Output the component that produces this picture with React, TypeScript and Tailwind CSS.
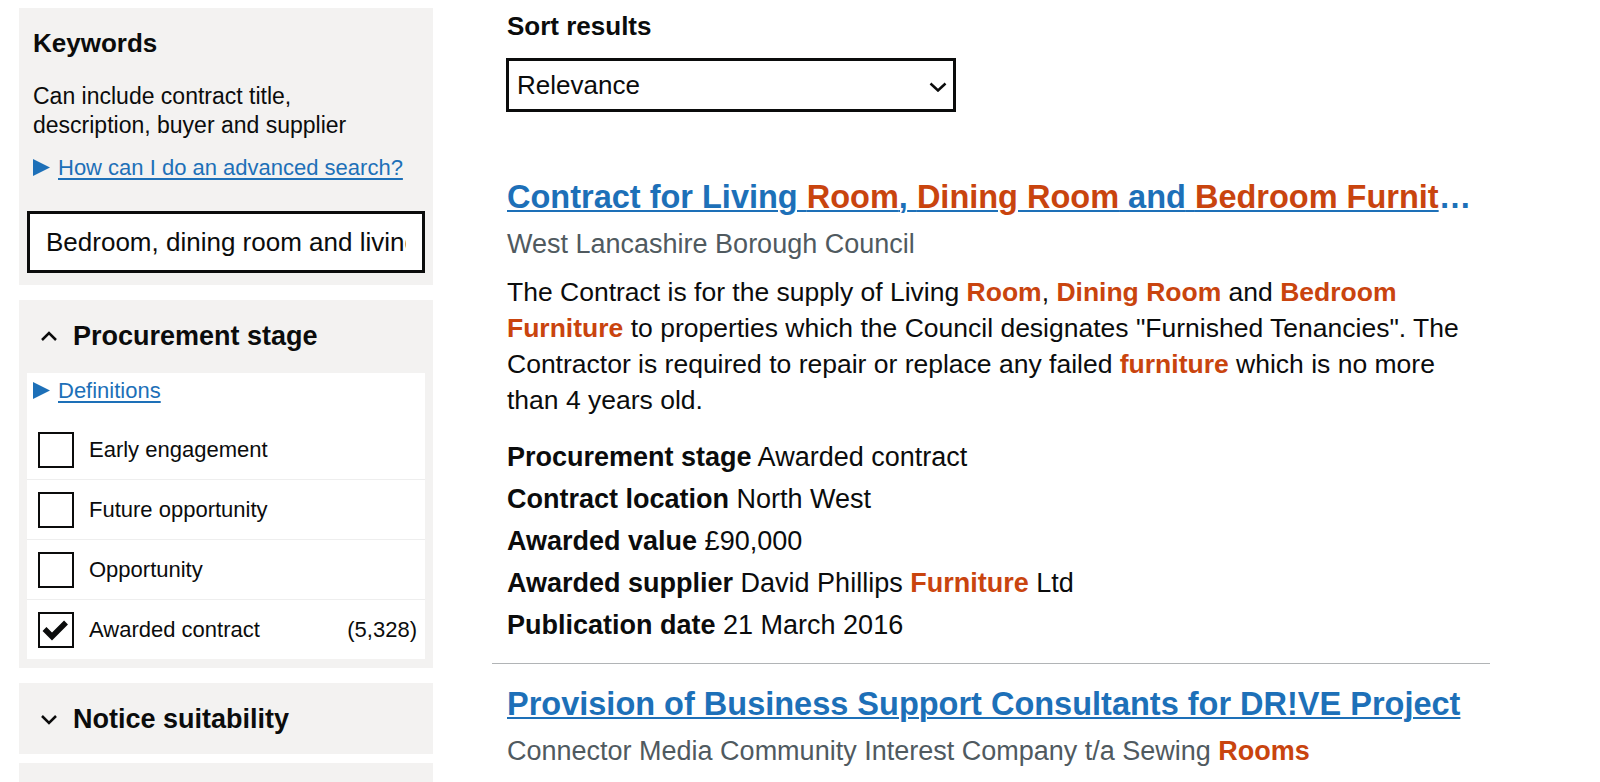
import React from 'react';

// Filtres de la colonne de gauche
const stages = [
  { label: 'Early engagement', checked: false, count: '' },
  { label: 'Future opportunity', checked: false, count: '' },
  { label: 'Opportunity', checked: false, count: '' },
  { label: 'Awarded contract', checked: true, count: '(5,328)' },
];

const meta = [
  { label: 'Procurement stage', value: 'Awarded contract' },
  { label: 'Contract location', value: 'North West' },
  { label: 'Awarded value', value: '£90,000' },
  { label: 'Awarded supplier', value: 'David Phillips ', hit: 'Furniture', after: ' Ltd' },
  { label: 'Publication date', value: '21 March 2016' },
];

function Hit({ children }: { children: React.ReactNode }) {
  return <span className="text-[#c9440e] font-bold">{children}</span>;
}

function Disclosure({ children }: { children: React.ReactNode }) {
  return (
    <div className="flex items-center gap-[8px] h-[28px]">
      <svg width="17" height="17" viewBox="0 0 17 17" className="shrink-0">
        <polygon points="0,0 17,8.5 0,17" fill="#1d70b8" />
      </svg>
      <a href="#" className="text-[22px] text-[#1d70b8] underline underline-offset-[3px]">
        {children}
      </a>
    </div>
  );
}

function Chevron({ up }: { up?: boolean }) {
  return (
    <svg width="18" height="12" viewBox="0 0 18 12" className="shrink-0">
      <path
        d={up ? 'M2 10 L9 3 L16 10' : 'M2 3 L9 10 L16 3'}
        fill="none"
        stroke="#0b0c0c"
        strokeWidth={2.5}
      />
    </svg>
  );
}

export default function App() {
  return (
    <div className="flex items-start bg-white min-h-screen text-[#0b0c0c] font-['Liberation_Sans',Arial,sans-serif]">
      {/* Sidebar */}
      <aside className="w-[414px] ml-[19px] mt-[8px] flex flex-col">
        {/* Keywords */}
        <div className="bg-[#f3f2f1] px-[8px] pt-[19px] pb-[12px]">
          <div className="px-[6px]">
            <h2 className="text-[26px] leading-[32px] font-bold">Keywords</h2>
            <p className="mt-[23px] text-[23px] leading-[29px]">
              Can include contract title,
              <br />
              description, buyer and supplier
            </p>
            <div className="mt-[13px]">
              <Disclosure>How can I do an advanced search?</Disclosure>
            </div>
          </div>
          <input
            className="mt-[30px] w-full h-[62px] border-[3px] border-[#0b0c0c] bg-white px-[16px] text-[26px] outline-none"
            defaultValue="Bedroom, dining room and living room furniture"
          />
        </div>

        {/* Procurement stage */}
        <div className="mt-[15px] bg-[#f3f2f1] px-[8px] pt-[19px] pb-[9px]">
          <div className="flex items-center gap-[15px] pl-[13px] h-[34px]">
            <Chevron up />
            <h2 className="text-[27px] leading-[34px] font-bold">Procurement stage</h2>
          </div>
          <div className="mt-[20px] bg-white pt-[3px]">
            <div className="pl-[6px]">
              <Disclosure>Definitions</Disclosure>
            </div>
            <div className="mt-[16px]">
              {stages.map((s, i) => (
                <div
                  key={s.label}
                  className={
                    i < stages.length - 1
                      ? 'flex items-center h-[60px] pl-[11px] pr-[8px] border-b border-[#eeeeee]'
                      : 'flex items-center h-[59px] pl-[11px] pr-[8px]'
                  }
                >
                  <div className="w-[36px] h-[36px] border-2 border-[#0b0c0c] shrink-0 flex items-center justify-center">
                    {s.checked && (
                      <svg width="32" height="32" viewBox="0 0 32 32">
                        <path d="M4.5 15 L12 22.5 L26 8.5" fill="none" stroke="#0b0c0c" strokeWidth={5.5} />
                      </svg>
                    )}
                  </div>
                  <span className="ml-[15px] text-[22px] flex-1">{s.label}</span>
                  {s.count && <span className="text-[22px]">{s.count}</span>}
                </div>
              ))}
            </div>
          </div>
        </div>

        {/* Notice suitability */}
        <div className="mt-[15px] bg-[#f3f2f1] px-[8px] pt-[19px] pb-[18px]">
          <div className="flex items-center gap-[15px] pl-[13px] h-[34px]">
            <Chevron />
            <h2 className="text-[27px] leading-[34px] font-bold">Notice suitability</h2>
          </div>
        </div>

        <div className="mt-[9px] bg-[#f3f2f1] h-[60px]"></div>
      </aside>

      {/* Results */}
      <main className="ml-[59px] w-[998px] pt-[10px]">
        <div className="px-[15px]">
          <h2 className="text-[26px] leading-[32px] font-bold">Sort results</h2>
          <div className="relative mt-[16px] w-[450px] -ml-px">
            <select className="appearance-none w-full h-[54px] border-[3px] border-[#0b0c0c] bg-white pl-[8px] text-[26px] outline-none">
              <option>Relevance</option>
            </select>
            <svg
              width="18"
              height="10"
              viewBox="0 0 18 10"
              className="absolute right-[9px] top-[24px] pointer-events-none"
            >
              <path d="M1.5 1.5 L9 8.5 L16.5 1.5" fill="none" stroke="#0b0c0c" strokeWidth={2.5} />
            </svg>
          </div>
        </div>

        <ul className="mt-[45px]">
          <li className="px-[15px] pt-[20px] pb-[17px] border-b border-[#b1b4b6]">
            <h3 className="truncate text-[32.5px] leading-[40px] font-bold text-[#1d70b8]">
              <a href="#" className="underline decoration-2 underline-offset-[2px]">
                Contract for Living <span className="text-[#c9440e]">Room</span>,{' '}
                <span className="text-[#c9440e]">Dining Room</span> and{' '}
                <span className="text-[#c9440e]">Bedroom Furniture</span>
              </a>
            </h3>
            <p className="mt-[9px] text-[27px] leading-[36px] text-[#505a5f]">
              West Lancashire Borough Council
            </p>
            <p className="mt-[12px] text-[26.5px] leading-[36px]">
              The Contract is for the supply of Living <Hit>Room</Hit>, <Hit>Dining Room</Hit> and{' '}
              <Hit>Bedroom Furniture</Hit> to properties which the Council designates "Furnished
              Tenancies". The Contractor is required to repair or replace any failed{' '}
              <Hit>furniture</Hit> which is no more than 4 years old.
            </p>
            <div className="mt-[18px]">
              {meta.map((m) => (
                <p key={m.label} className="text-[27px] leading-[42px]">
                  <span className="font-bold">{m.label}</span> {m.value}
                  {m.hit && <Hit>{m.hit}</Hit>}
                  {m.after}
                </p>
              ))}
            </div>
          </li>
          <li className="px-[15px] pt-[20px] pb-[17px]">
            <h3 className="truncate text-[32.5px] leading-[40px] font-bold text-[#1d70b8]">
              <a href="#" className="underline decoration-2 underline-offset-[2px]">
                Provision of Business Support Consultants for DR!VE Project
              </a>
            </h3>
            <p className="mt-[9px] text-[27px] leading-[36px] text-[#505a5f]">
              Connector Media Community Interest Company t/a Sewing <Hit>Rooms</Hit>
            </p>
          </li>
        </ul>
      </main>
    </div>
  );
}
